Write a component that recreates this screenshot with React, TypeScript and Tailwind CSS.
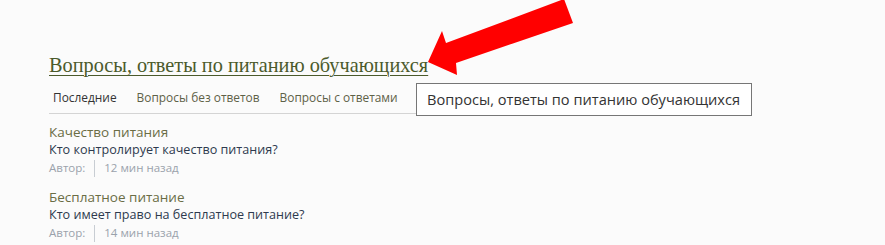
import React from "react";

const sans = { fontFamily: '"Open Sans", "Noto Sans", sans-serif' };

const items = [
    { title: "Качество питания", question: "Кто контролирует качество питания?", time: "12 мин назад" },
    { title: "Бесплатное питание", question: "Кто имеет право на бесплатное питание?", time: "14 мин назад" },
];

const Arrow = () => (
    <svg className="absolute left-0 top-0 pointer-events-none" width="885" height="245" viewBox="0 0 885 245">
        <polygon points="428,62 442,31 446,43 564,-1 573,23 456,63 457,75" fill="#ff0000" />
    </svg>
);

export default function App() {
    return (
        <div className="relative w-[885px] h-[245px] overflow-hidden bg-[#fbfbfb]">
            <div className="pl-[49px] pt-[53px] w-[600px]">
                <a
                    href="#"
                    className="text-[20.3px] leading-[24px] text-[#4b5a2b] underline underline-offset-[3px] decoration-1"
                    style={{ fontFamily: '"Liberation Serif", serif' }}
                >
                    Вопросы, ответы по питанию обучающихся
                </a>

                <div className="mt-[10px] flex gap-[20px] border-b border-[#d4d4d4] pb-[7px] pl-[4px] w-[520px] text-[11.9px] leading-[18px]" style={sans}>
                    <span className="text-[#333333]">Последние</span>
                    <span className="text-[#5e6147]">Вопросы без ответов</span>
                    <span className="text-[#5e6147]">Вопросы с ответами</span>
                </div>

                <div className="mt-[9px] flex flex-col gap-[11px]" style={sans}>
                    {items.map((it) => (
                        <div key={it.title} className="flex flex-col">
                            <span className="text-[13.5px] leading-[18px] text-[#6a6d45]">{it.title}</span>
                            <span className="text-[12.6px] leading-[18px] text-[#2e3a4e]">{it.question}</span>
                            <div className="flex items-center text-[11.5px] leading-[18px] text-[#9aa2ab]">
                                <span>Автор:</span>
                                <span className="ml-[9px] mr-[9px] h-[17px] w-px bg-[#c8cdd3]" />
                                <span>{it.time}</span>
                            </div>
                        </div>
                    ))}
                </div>
            </div>

            {/* browser tooltip */}
            <div
                className="absolute left-[416px] top-[83px] w-[336px] h-[33px] border border-[#767676] bg-white pl-[10px] text-[14.6px] leading-[31px] text-[#333333]"
                style={sans}
            >
                Вопросы, ответы по питанию обучающихся
            </div>

            <Arrow />
        </div>
    );
}
